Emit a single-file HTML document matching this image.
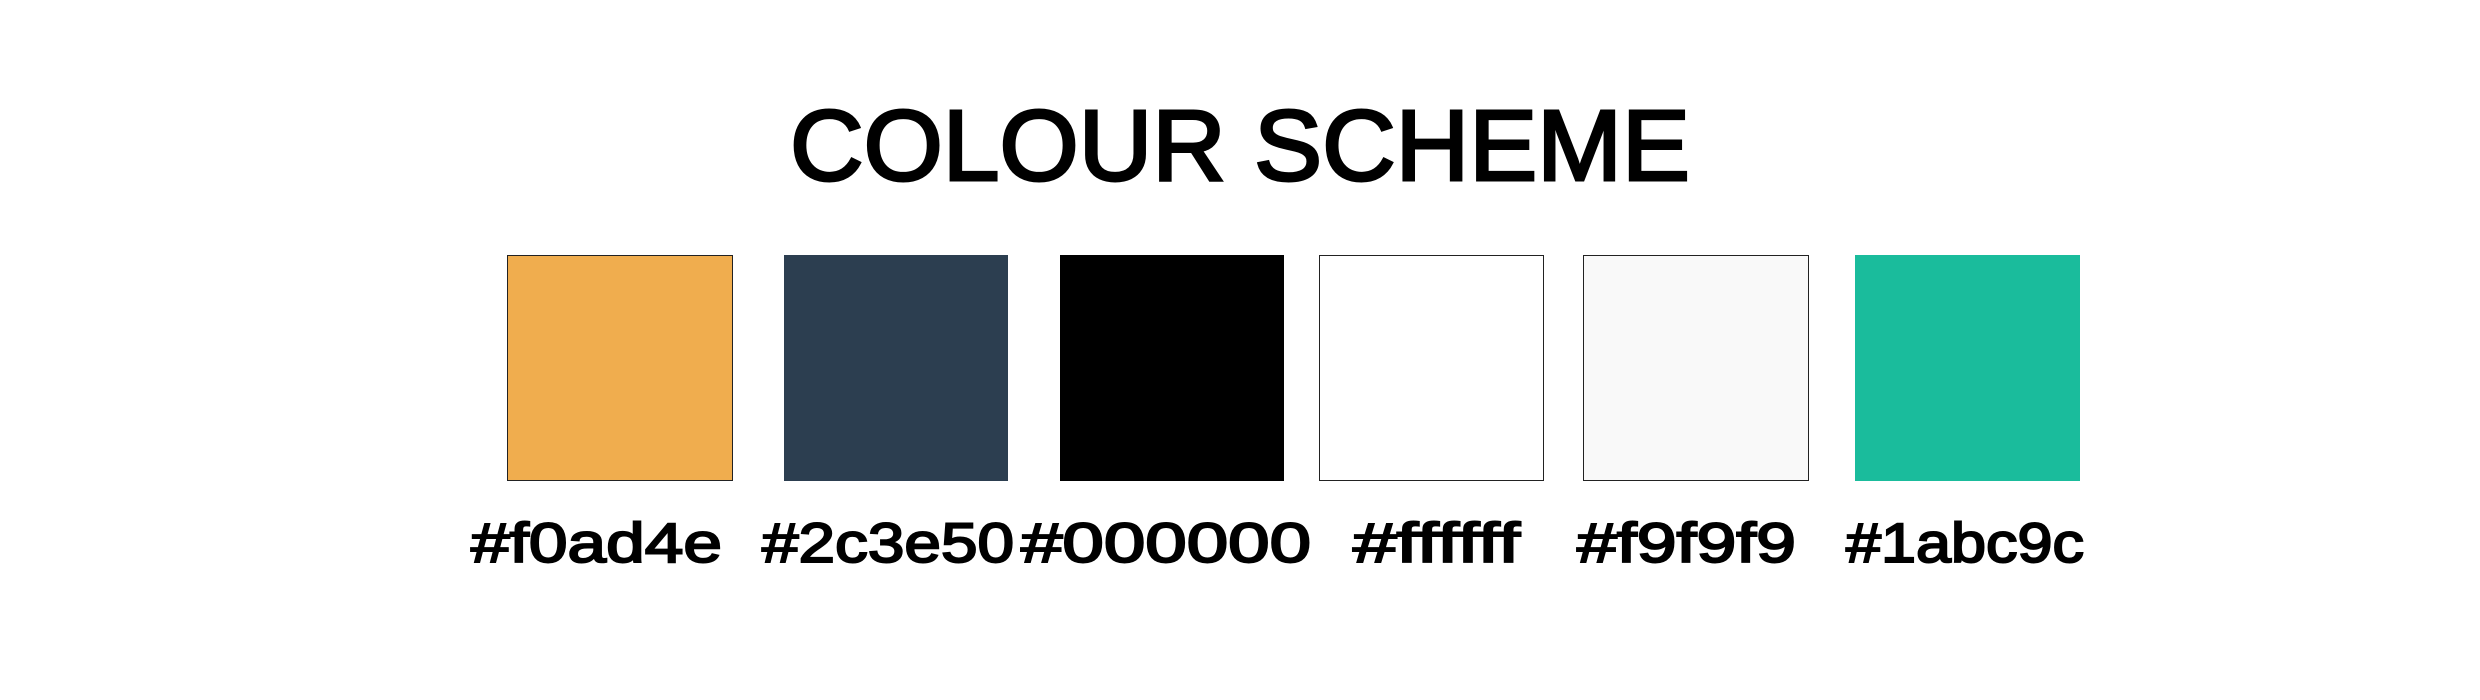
<!DOCTYPE html>
<html><head><meta charset="utf-8"><style>
html,body{margin:0;padding:0;background:#fff;width:2480px;height:700px;overflow:hidden}
.sq{position:absolute;top:255px;height:226px;box-sizing:border-box}
svg{position:absolute;left:0;top:0}
</style></head><body>
<div class="sq" style="left:507px;width:226px;background:#f0ad4e;border:1.5px solid #222"></div>
<div class="sq" style="left:784px;width:224px;background:#2c3e50"></div>
<div class="sq" style="left:1060px;width:224px;background:#000"></div>
<div class="sq" style="left:1319px;width:225px;background:#fff;border:1.5px solid #222"></div>
<div class="sq" style="left:1583px;width:226px;background:#f9f9f9;border:1.5px solid #222"></div>
<div class="sq" style="left:1855px;width:225px;background:#1abc9c"></div>
<svg width="2480" height="700" xmlns="http://www.w3.org/2000/svg" font-family="Liberation Sans, sans-serif" font-weight="normal" fill="#000" stroke="#000">
<text x="790" y="180" font-size="100" stroke-width="3" textLength="900" lengthAdjust="spacingAndGlyphs">COLOUR SCHEME</text>
<g font-size="56" stroke-width="2">
<text x="471" y="562" textLength="251" lengthAdjust="spacingAndGlyphs">#f0ad4e</text>
<text x="762" y="562" textLength="252" lengthAdjust="spacingAndGlyphs">#2c3e50</text>
<text x="1021" y="562" textLength="290" lengthAdjust="spacingAndGlyphs">#000000</text>
<text x="1353" y="562" textLength="167" lengthAdjust="spacingAndGlyphs">#ffffff</text>
<text x="1577" y="562" textLength="219" lengthAdjust="spacingAndGlyphs">#f9f9f9</text>
<text x="1846" y="562" textLength="238" lengthAdjust="spacingAndGlyphs">#1abc9c</text>
</g>
</svg>
</body></html>
